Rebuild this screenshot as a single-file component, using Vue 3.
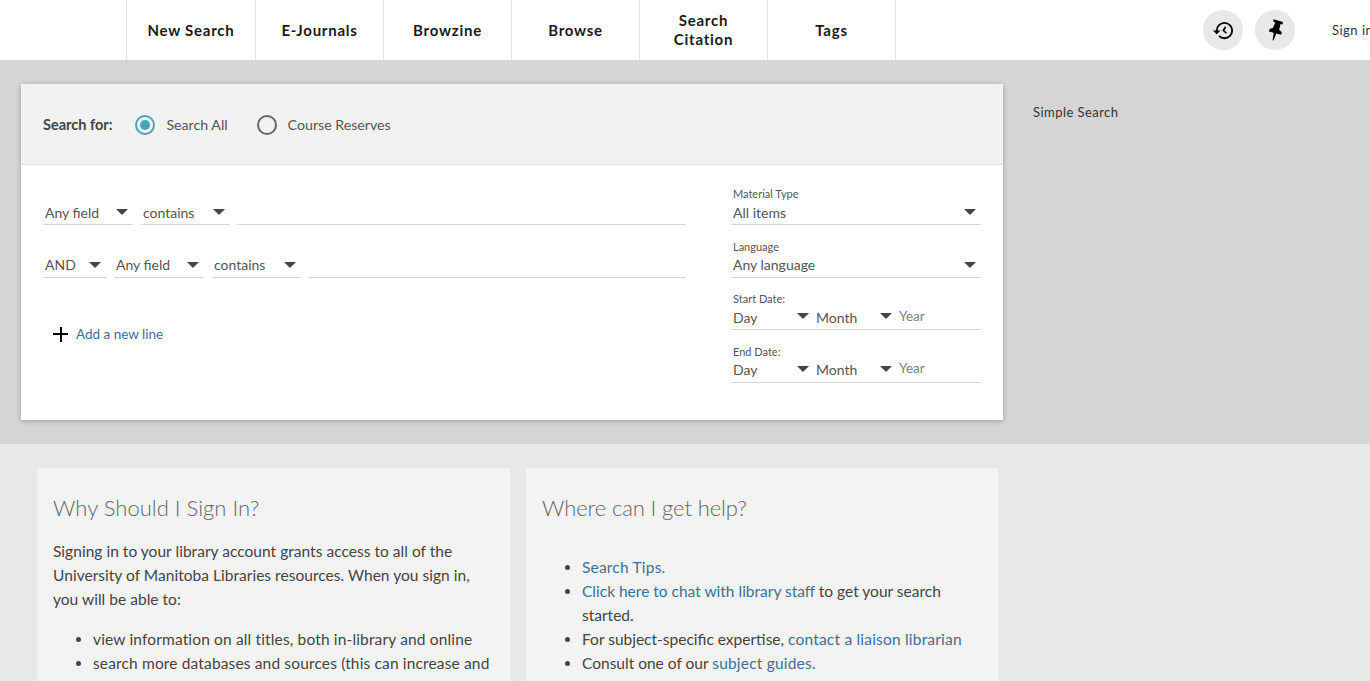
<script setup>
const navItems = ['New Search', 'E-Journals', 'Browzine', 'Browse', 'Search Citation', 'Tags']
</script>

<template>
  <div class="page">
    <header class="topbar">
      <nav class="nav">
        <a v-for="item in navItems" :key="item" class="nav-item">{{ item }}</a>
      </nav>
      <div class="tools">
        <button class="round">
          <svg width="23" height="23" viewBox="0 0 24 24"><path d="M13 3a9 9 0 0 0-9 9H1l3.89 3.89.07.14L9 12H6c0-3.87 3.13-7 7-7s7 3.13 7 7-3.13 7-7 7c-1.93 0-3.68-.79-4.94-2.06l-1.42 1.42A8.954 8.954 0 0 0 13 21a9 9 0 0 0 0-18zm.5 4.6L10.7 12l3.8 3.4 1.1-1.2-2.6-2.3 1.9-3.2z"/></svg>
        </button>
        <button class="round">
          <svg width="24" height="24" viewBox="0 0 24 24"><path d="M10.2 1.2l9.9 2.7-.7 2.5-1.9-.5-1.3 5.9 2.6 2.4-.7 2.5-4.8-1.3-2.9 7-.8-.2 1.1-7.5-4.8-1.3.7-2.5 3.3-1 2.4-5.5-1.6-.5z"/></svg>
        </button>
        <span class="signin">Sign in</span>
      </div>
    </header>

    <section class="search-zone">
      <div class="card">
        <div class="scope">
          <span class="scope-label">Search for:</span>
          <label class="radio on"><i></i>Search All</label>
          <label class="radio"><i></i>Course Reserves</label>
        </div>
        <div class="form">
          <div class="lines">
            <div class="line first">
              <div class="sel w90">Any field</div>
              <div class="sel w89">contains</div>
              <div class="input"></div>
            </div>
            <div class="line">
              <div class="sel w63">AND</div>
              <div class="sel w90">Any field</div>
              <div class="sel w89">contains</div>
              <div class="input"></div>
            </div>
            <a class="add"><span class="plus"></span>Add a new line</a>
          </div>
          <div class="filters">
            <div class="field low">
              <div class="cap">Material Type</div>
              <div class="sel wide">All items</div>
            </div>
            <div class="field">
              <div class="cap">Language</div>
              <div class="sel wide">Any language</div>
            </div>
            <div class="field short low">
              <div class="cap">Start Date:</div>
              <div class="date">
                <div class="sel day">Day</div>
                <div class="sel month">Month</div>
                <span class="year">Year</span>
              </div>
            </div>
            <div class="field">
              <div class="cap">End Date:</div>
              <div class="date">
                <div class="sel day">Day</div>
                <div class="sel month">Month</div>
                <span class="year">Year</span>
              </div>
            </div>
          </div>
        </div>
      </div>
      <div class="mode">Simple Search</div>
    </section>

    <section class="info">
      <article class="panel left">
        <h2>Why Should I Sign In?</h2>
        <p>Signing in to your library account grants access to all of the University of Manitoba Libraries resources. When you sign in, you will be able to:</p>
        <ul>
          <li class="loose">view information on all titles, both in-library and online</li>
          <li class="loose">search more databases and sources (this can increase and</li>
        </ul>
      </article>
      <article class="panel right">
        <h2>Where can I get help?</h2>
        <ul class="help">
          <li><a class="spaced">Search Tips.</a></li>
          <li><a>Click here to chat with library staff</a> to get your search started.</li>
          <li>For subject-specific expertise, <a class="spaced">contact a liaison librarian</a></li>
          <li>Consult one of our <a class="spaced">subject guides.</a></li>
        </ul>
      </article>
    </section>
  </div>
</template>

<style>
html, body { margin: 0; overflow: hidden; }
</style>

<style scoped>
.page {
  width: 1370px;
  height: 681px;
  overflow: hidden;
  background: #e8e8e8;
  font-family: Lato, "Open Sans", sans-serif;
  color: #3d3d3d;
}
.topbar {
  height: 60px;
  background: #fff;
  display: flex;
  padding-left: 126px;
  box-sizing: border-box;
}
.nav { display: flex; }
.nav-item {
  width: 128px;
  height: 60px;
  box-sizing: border-box;
  border-left: 1px solid #e3e3e3;
  display: flex;
  align-items: center;
  justify-content: center;
  text-align: center;
  padding: 0 20px;
  font-size: 15px;
  line-height: 19px;
  font-weight: 700;
  letter-spacing: 0.75px;
  color: #1a1a1a;
}
.nav-item:first-child { width: 129px; }
.nav-item:last-child { border-right: 1px solid #e3e3e3; width: 129px; }
.tools {
  display: flex;
  align-items: center;
  margin-left: 307px;
  white-space: nowrap;
}
.round {
  width: 40px;
  height: 40px;
  border: 0;
  border-radius: 50%;
  background: #e8e8e8;
  padding: 0;
  margin-right: 12px;
  display: flex;
  align-items: center;
  justify-content: center;
}
.signin { margin-left: 25px; font-size: 13px; letter-spacing: 0.5px; color: #333; }

.search-zone {
  height: 384px;
  box-sizing: border-box;
  background: #d5d5d5;
  padding: 24px 0 0 21px;
  display: flex;
}
.card {
  width: 982px;
  height: 336px;
  background: #fff;
  box-shadow: 0 1px 5px rgba(0, 0, 0, 0.28);
}
.scope {
  height: 81px;
  box-sizing: border-box;
  background: #f2f2f2;
  border-bottom: 1px solid #e0e0e0;
  display: flex;
  align-items: center;
  padding-left: 22px;
}
.scope-label { font-weight: 700; color: #444; margin-right: 23px; font-size: 14.5px; }
.radio { display: flex; align-items: center; color: #555; margin-right: 30px; font-size: 14.2px; padding-top: 1px; }
.radio.on { margin-right: 29px; }
.radio i {
  width: 20px;
  height: 20px;
  box-sizing: border-box;
  border: 2px solid #666;
  border-radius: 50%;
  margin-right: 11px;
  position: relative;
}
.radio.on i { border-color: #3fa9b5; }
.radio.on i::after {
  content: "";
  position: absolute;
  inset: 3px;
  border-radius: 50%;
  background: #3fa9b5;
}
.form {
  display: flex;
  justify-content: space-between;
  padding: 7px 22px 0 22px;
}
.lines { width: 643px; }
.line {
  height: 53px;
  box-sizing: border-box;
  display: flex;
  align-items: flex-end;
  gap: 8px;
}
.sel {
  position: relative;
  height: 28px;
  box-sizing: border-box;
  border-bottom: 1px solid #d6d6d6;
  padding-left: 2px;
  font-size: 14px;
  line-height: 30px;
  color: #555;
}
.first .sel { line-height: 32px; }
.sel::after {
  content: "";
  position: absolute;
  right: 5px;
  top: 12px;
  border-left: 6px solid transparent;
  border-right: 6px solid transparent;
  border-top: 6px solid #444;
}
.w90 { width: 90px; }
.w89 { width: 89px; }
.w63 { width: 63px; }
.input { flex: 1; height: 28px; box-sizing: border-box; border-bottom: 1px solid #d6d6d6; margin-left: -1px; }
.add {
  display: flex;
  align-items: center;
  margin: 48px 0 0 10px;
  font-size: 13.5px;
  color: #3f6f96;
}
.plus { position: relative; width: 15px; height: 15px; margin-right: 8px; }
.plus::before, .plus::after { content: ""; position: absolute; background: #000; }
.plus::before { left: 0; right: 0; top: 6.5px; height: 2px; }
.plus::after { top: 0; bottom: 0; left: 6.5px; width: 2px; }
.filters { width: 250px; }
.field {
  height: 53px;
  box-sizing: border-box;
  display: flex;
  flex-direction: column;
  justify-content: flex-end;
}
.field.short { height: 52px; }
.cap { font-size: 11px; line-height: 14px; color: #555; padding-left: 2px; }
.wide { height: 24px; line-height: 22px; }
.low .wide { line-height: 24px; }
.wide::after { top: 8px; }
.date {
  display: flex;
  height: 24px;
  box-sizing: border-box;
  border-bottom: 1px solid #d6d6d6;
}
.date .sel { border: 0; height: 23px; line-height: 22px; }
.low .date .sel { line-height: 24px; }
.date .sel::after { top: 7px; }
.day { width: 83px; }
.month { width: 83px; }
.year { font-size: 13.5px; line-height: 18px; color: #808080; padding-left: 2px; }
.low .year { line-height: 20px; }

.mode { margin: 20px 0 0 30px; font-size: 13px; letter-spacing: 0.45px; color: #333; }

.info {
  display: flex;
  padding: 24px 0 0 37px;
  gap: 16px;
  font-size: 15.5px;
  line-height: 24px;
  color: #444;
}
.panel {
  background: #f3f3f3;
  box-sizing: border-box;
  padding: 24px 16px 0;
  height: 300px;
}
.left { width: 473px; }
.right { width: 472px; }
h2 { margin: 0 0 17px; font-size: 22px; line-height: 31px; font-weight: 300; letter-spacing: -0.1px; color: #666; }
.left h2 { letter-spacing: 0.02px; }
p { margin: 0 0 16px; margin-top: -1px; letter-spacing: 0.03px; }
ul { margin: 0; padding-left: 40px; }
.help { margin-top: 32px; }
.loose { letter-spacing: 0.15px; }
li a { color: #3f6f96; }
.spaced { letter-spacing: 0.2px; }
</style>
